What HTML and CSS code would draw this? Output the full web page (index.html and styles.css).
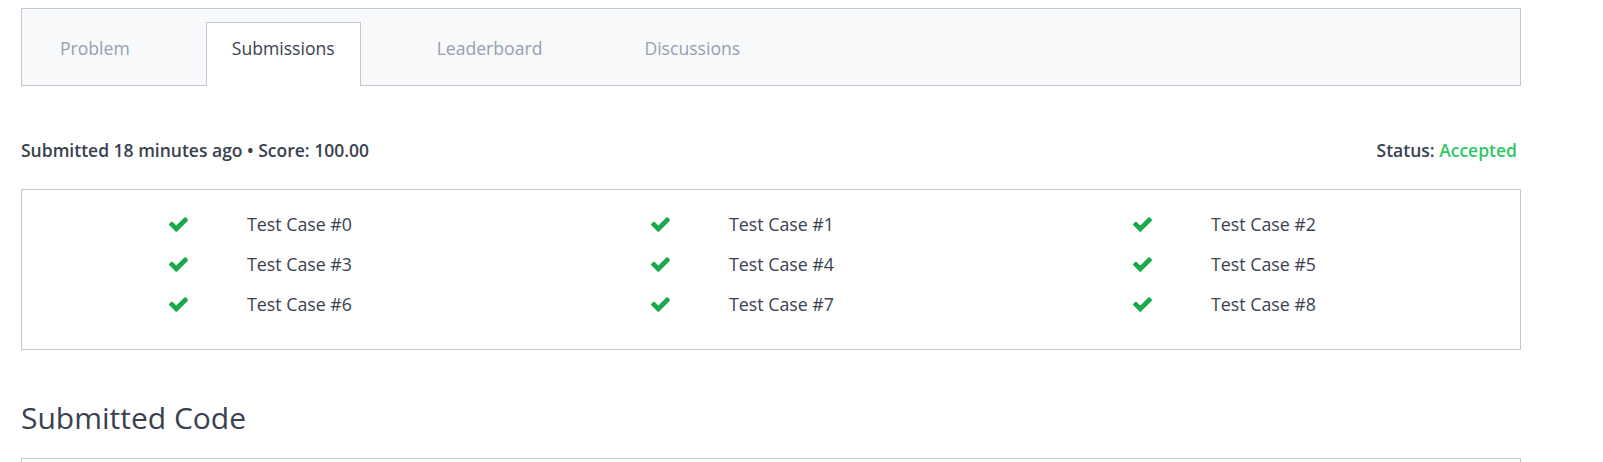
FILE: index.html
```html
<!DOCTYPE html>
<html>
<head>
<meta charset="utf-8">
<link rel="stylesheet" href="styles.css">
</head>
<body>
<div class="page">
  <nav class="tabs">
    <div class="tab">Problem</div>
    <div class="tab active">Submissions</div>
    <div class="tab">Leaderboard</div>
    <div class="tab">Discussions</div>
  </nav>

  <div class="status-row">
    <div class="meta">Submitted 18 minutes ago • Score: 100.00</div>
    <div class="status">Status: <span class="accepted">Accepted</span></div>
  </div>

  <div class="cases">
    <div class="case"><svg class="check" viewBox="121 334 1550 1188"><path d="M1671 566q0 40-28 68l-724 724-136 136q-28 28-68 28t-68-28l-136-136-362-362q-28-28-28-68t28-68l136-136q28-28 68-28t68 28l294 295 656-657q28-28 68-28t68 28l136 136q28 28 28 68z"/></svg><span class="label">Test Case #0</span></div>
    <div class="case"><svg class="check" viewBox="121 334 1550 1188"><path d="M1671 566q0 40-28 68l-724 724-136 136q-28 28-68 28t-68-28l-136-136-362-362q-28-28-28-68t28-68l136-136q28-28 68-28t68 28l294 295 656-657q28-28 68-28t68 28l136 136q28 28 28 68z"/></svg><span class="label">Test Case #1</span></div>
    <div class="case"><svg class="check" viewBox="121 334 1550 1188"><path d="M1671 566q0 40-28 68l-724 724-136 136q-28 28-68 28t-68-28l-136-136-362-362q-28-28-28-68t28-68l136-136q28-28 68-28t68 28l294 295 656-657q28-28 68-28t68 28l136 136q28 28 28 68z"/></svg><span class="label">Test Case #2</span></div>
    <div class="case"><svg class="check" viewBox="121 334 1550 1188"><path d="M1671 566q0 40-28 68l-724 724-136 136q-28 28-68 28t-68-28l-136-136-362-362q-28-28-28-68t28-68l136-136q28-28 68-28t68 28l294 295 656-657q28-28 68-28t68 28l136 136q28 28 28 68z"/></svg><span class="label">Test Case #3</span></div>
    <div class="case"><svg class="check" viewBox="121 334 1550 1188"><path d="M1671 566q0 40-28 68l-724 724-136 136q-28 28-68 28t-68-28l-136-136-362-362q-28-28-28-68t28-68l136-136q28-28 68-28t68 28l294 295 656-657q28-28 68-28t68 28l136 136q28 28 28 68z"/></svg><span class="label">Test Case #4</span></div>
    <div class="case"><svg class="check" viewBox="121 334 1550 1188"><path d="M1671 566q0 40-28 68l-724 724-136 136q-28 28-68 28t-68-28l-136-136-362-362q-28-28-28-68t28-68l136-136q28-28 68-28t68 28l294 295 656-657q28-28 68-28t68 28l136 136q28 28 28 68z"/></svg><span class="label">Test Case #5</span></div>
    <div class="case"><svg class="check" viewBox="121 334 1550 1188"><path d="M1671 566q0 40-28 68l-724 724-136 136q-28 28-68 28t-68-28l-136-136-362-362q-28-28-28-68t28-68l136-136q28-28 68-28t68 28l294 295 656-657q28-28 68-28t68 28l136 136q28 28 28 68z"/></svg><span class="label">Test Case #6</span></div>
    <div class="case"><svg class="check" viewBox="121 334 1550 1188"><path d="M1671 566q0 40-28 68l-724 724-136 136q-28 28-68 28t-68-28l-136-136-362-362q-28-28-28-68t28-68l136-136q28-28 68-28t68 28l294 295 656-657q28-28 68-28t68 28l136 136q28 28 28 68z"/></svg><span class="label">Test Case #7</span></div>
    <div class="case"><svg class="check" viewBox="121 334 1550 1188"><path d="M1671 566q0 40-28 68l-724 724-136 136q-28 28-68 28t-68-28l-136-136-362-362q-28-28-28-68t28-68l136-136q28-28 68-28t68 28l294 295 656-657q28-28 68-28t68 28l136 136q28 28 28 68z"/></svg><span class="label">Test Case #8</span></div>
  </div>

  <h2 class="code-title">Submitted Code</h2>
  <div class="code-box"></div>
</div>
</body>
</html>
```

FILE: styles.css
```css
* { box-sizing: border-box; }

html, body {
  margin: 0;
  padding: 0;
  background: #fff;
  font-family: "Open Sans", "Liberation Sans", sans-serif;
  color: #39424e;
}

.page {
  width: 1500px;
  margin-left: 21px;
  padding-top: 8px;
}

.tabs {
  display: flex;
  align-items: flex-end;
  gap: 50px;
  height: 78px;
  padding-left: 12px;
  background: #f8f9fa;
  border: 1px solid #c2c7d0;
}

.tab {
  height: 64px;
  margin-bottom: -1px;
  padding: 14px 25px 0;
  border: 1px solid transparent;
  border-bottom: none;
  font-size: 17.6px;
  line-height: 22px;
  color: #979faf;
}

.tab.active {
  background: #fff;
  border-color: #c2c7d0;
  color: #39424e;
}

.status-row {
  display: flex;
  justify-content: space-between;
  align-items: center;
  margin-top: 52px;
  margin-bottom: 27px;
  padding-right: 4px;
  line-height: 24px;
  font-size: 17.5px;
  font-weight: 600;
}

.accepted { color: #2ec866; }

.cases {
  display: grid;
  grid-template-columns: repeat(3, 1fr);
  padding: 14px 26px 25px;
  border: 1px solid #c2c7d0;
}

.case {
  display: flex;
  align-items: center;
  height: 40px;
  padding-left: 121px;
}

.check {
  width: 19px;
  height: 15px;
  fill: #1ba94c;
}

.label {
  margin-left: 59px;
  font-size: 17.8px;
  color: #39424e;
}

.code-title {
  margin: 48px 0 20px;
  font-size: 30px;
  font-weight: 400;
  line-height: 40px;
  color: #39424e;
}

.code-box {
  height: 120px;
  border: 1px solid #c2c7d0;
  background: #fff;
}
```
